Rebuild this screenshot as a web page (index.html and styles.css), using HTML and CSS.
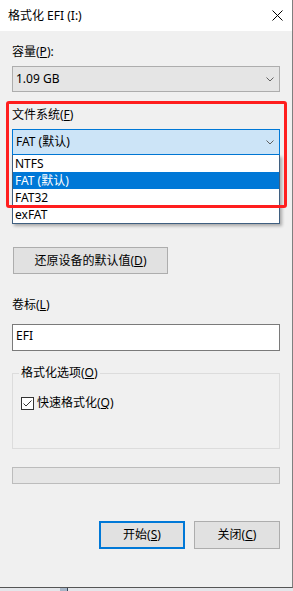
FILE: index.html
```html
<!DOCTYPE html>
<html lang="zh-CN">
<head>
    <meta charset="UTF-8">
    <meta name="viewport" content="width=device-width, initial-scale=1.0">
    <title>格式化 EFI (I:)</title>
    <link rel="stylesheet" href="styles.css">
</head>
<body>

    <div class="window">
        <div class="titlebar">
            <span class="title">格式化 EFI (I:)</span>
            <svg class="close" width="11" height="11" viewBox="0 0 11 11">
                <path d="M0.5 0.5 L10.5 10.5 M10.5 0.5 L0.5 10.5" stroke="#000" stroke-width="1" fill="none"/>
            </svg>
        </div>

        <div class="content">
            <div class="label">容量(<u>P</u>):</div>
            <div class="combo">
                <span>1.09 GB</span>
                <svg class="chevron" width="8" height="5" viewBox="0 0 8 5">
                    <polyline points="0.5,0.5 4,4 7.5,0.5" stroke="#606060" stroke-width="1" fill="none"/>
                </svg>
            </div>

            <div class="fs">
                <div class="label">文件系统(<u>F</u>)</div>
                <div class="combo focused">
                    <span>FAT (默认)</span>
                    <svg class="chevron" width="8" height="5" viewBox="0 0 8 5">
                        <polyline points="0.5,0.5 4,4 7.5,0.5" stroke="#606060" stroke-width="1" fill="none"/>
                    </svg>
                </div>
                <!-- open dropdown list -->
                <ul class="droplist">
                    <li>NTFS</li>
                    <li class="selected">FAT (默认)</li>
                    <li>FAT32</li>
                    <li>exFAT</li>
                </ul>
            </div>

            <button class="btn restore">还原设备的默认值(<u>D</u>)</button>

            <div class="label volume-label">卷标(<u>L</u>)</div>
            <div class="textbox">EFI</div>

            <fieldset class="options">
                <legend>格式化选项(<u>O</u>)</legend>
                <label class="check">
                    <svg width="13" height="13" viewBox="0 0 13 13">
                        <rect x="0.5" y="0.5" width="12" height="12" fill="#fff" stroke="#333"/>
                        <polyline points="2.5,6.5 5,9 10.5,3.5" stroke="#333" stroke-width="1" fill="none"/>
                    </svg>
                    <span>快速格式化(<u>Q</u>)</span>
                </label>
            </fieldset>

            <div class="progress"></div>

            <div class="actions">
                <button class="btn primary">开始(<u>S</u>)</button>
                <button class="btn">关闭(<u>C</u>)</button>
            </div>
        </div>
    </div>

    <div class="taskbar"><span class="task-item"></span></div>

    <!-- red highlight drawn over the file system field -->
    <div class="highlight"></div>

</body>
</html>
```

FILE: styles.css
```css
body {
    margin: 0;
    width: 293px;
    height: 591px;
    overflow: hidden;
    position: relative;
    background: #e4e6ea;
    font-family: "Noto Sans", "Noto Sans CJK SC", sans-serif;
    font-size: 12px;
    color: #000;
}
.window {
    width: 292px;
    height: 587px;
    background: #f0f0f0;
    border-right: 1px solid #7f7f7f;
    border-bottom: 1px solid #555;
}
.titlebar {
    height: 31px;
    box-sizing: border-box;
    background: #fff;
    display: flex;
    justify-content: space-between;
    padding: 8px 9px 0 8px;
    line-height: 16px;
}
.close {
    margin-top: 2px;
}
.content {
    padding: 13px 12px 0;
}
.label {
    line-height: 16px;
}
.combo {
    margin-top: 6px;
    height: 26px;
    box-sizing: border-box;
    border: 1px solid #adadad;
    background: #e5e5e5;
    display: flex;
    align-items: center;
    justify-content: space-between;
    padding: 0 5px 0 3px;
    line-height: 16px;
}
.combo.focused {
    background: #cce4f7;
    border-color: #0078d7;
}
.fs {
    margin-top: 15px;
    position: relative;
}
.droplist {
    position: absolute;
    left: 0;
    right: 0;
    top: 100%;
    margin: 0;
    padding: 0;
    list-style: none;
    background: #fff;
    border: 1px solid #3f5f80;
    border-top: none;
    box-shadow: 2px 2px 3px rgba(0, 0, 0, 0.3);
    z-index: 2;
}
.droplist li {
    height: 17px;
    box-sizing: border-box;
    padding: 1px 0 0 2px;
    line-height: 16px;
}
.droplist li.selected {
    background: #0078d7;
    color: #fff;
}
.btn {
    font: inherit;
    color: #000;
    background: #e1e1e1;
    border: 1px solid #adadad;
    padding: 0;
    line-height: 16px;
    box-sizing: border-box;
}
.restore {
    display: block;
    margin-top: 92px;
    margin-left: 1px;
    width: 155px;
    height: 27px;
}
.volume-label {
    margin-top: 23px;
}
.textbox {
    margin-top: 11px;
    height: 27px;
    box-sizing: border-box;
    border: 1px solid #7a7a7a;
    background: #fff;
    padding-left: 3px;
    line-height: 22px;
}
.options {
    margin: 14px 0 0;
    padding: 14px 8px 37px;
    border: 1px solid #dcdcdc;
}
.options legend {
    padding: 0 2px;
    margin-left: -2px;
    line-height: 16px;
}
.check {
    display: flex;
    align-items: center;
    gap: 3px;
    line-height: 16px;
}
.progress {
    margin-top: 18px;
    height: 17px;
    box-sizing: border-box;
    border: 1px solid #bcbcbc;
    background: #e6e6e6;
}
.actions {
    margin-top: 37px;
    display: flex;
    justify-content: flex-end;
    gap: 9px;
}
.actions .btn {
    width: 86px;
    height: 28px;
}
.btn.primary {
    border: 2px solid #0078d7;
}
.taskbar {
    height: 3px;
}
.task-item {
    display: block;
    margin-left: 60px;
    width: 7px;
    height: 3px;
    background: #a7b6c8;
    border-right: 1px solid #3a4658;
}
.highlight {
    position: absolute;
    left: 6px;
    top: 101px;
    width: 281px;
    height: 107px;
    box-sizing: border-box;
    border: 3px solid #ff1e1e;
    border-radius: 3px;
    z-index: 3;
}
```
